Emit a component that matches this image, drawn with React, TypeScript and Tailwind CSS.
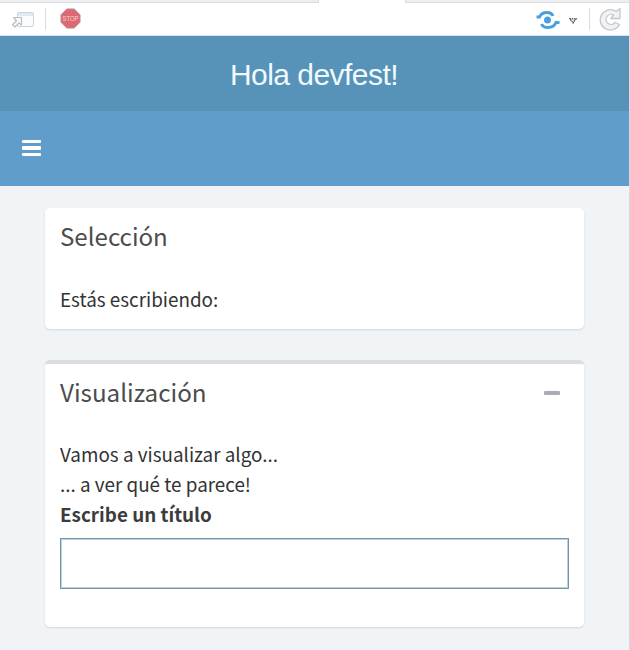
import React from "react";

function PopOutIcon() {
  return (
    <svg width="26" height="20" viewBox="0 0 26 20" fill="none" className="shrink-0">
      <rect x="6.5" y="3.5" width="16" height="14" rx="1.5" fill="#fbfcfd" stroke="#cbd2d9" />
      <rect x="7" y="4" width="15" height="3" fill="#dcecf7" />
      <path d="M2.500 8.500h8v7.500l-2.500-2-4 4-2.500-2.300 4-3.700z" fill="#fafafa" stroke="#b9bec4" strokeWidth="1.200" strokeLinejoin="round" />
    </svg>
  );
}

function StopIcon() {
  return (
    <svg width="22" height="22" viewBox="0 0 22 22" className="shrink-0">
      <path d="M6.800 1h7.400L20 6.800v7.400L14.200 20H6.800L1 14.200V6.800z" fill="#da6a73" stroke="#c58189" />
      <text x="10.500" y="13.200" textAnchor="middle" fontSize="7.500" textLength="16" lengthAdjust="spacingAndGlyphs" fontFamily="Liberation Sans, sans-serif" fill="#ffcdd0">STOP</text>
    </svg>
  );
}

function PublishIcon() {
  return (
    <svg width="26" height="20" viewBox="0 0 26 20" fill="none" className="shrink-0">
      <circle cx="12.500" cy="11" r="3.500" fill="#4aa0dc" />
      <path d="M1.500 8h3C6 4.500 9 3.500 12 3.500c3 0 5 1 6 3.500" stroke="#4aa0dc" strokeWidth="3" />
      <path d="M24.500 13.500h-3.500C19.500 17 16.500 18.500 13 18.500c-3 0-5.500-1-6.500-3.500" stroke="#4aa0dc" strokeWidth="3" />
    </svg>
  );
}

function RefreshIcon() {
  return (
    <svg width="24" height="24" viewBox="0 0 24 24" fill="none" className="shrink-0">
      <path
        d="M17.300 4.500 21 1.500V11.500H12L14.500 8A5 5 0 1 0 16 15.500L20.500 17.500A10.200 10.200 0 1 1 17.300 4.500Z"
        fill="#f0f2f4"
        stroke="#c3c8ce"
        strokeWidth="1.300"
        strokeLinejoin="round"
      />
    </svg>
  );
}

function Toolbar() {
  return (
    <div className="flex h-9 flex-col border-b border-[#d3e8f2] bg-white">
      <div className="flex h-[3px] justify-between">
        <div className="w-[319px] border-r border-b border-[#d9dcde] bg-[#eeeff0]" />
        <div className="w-[225px] border-b border-l border-[#d9dcde] bg-[#eeeff0]" />
      </div>
      <div className="flex h-8 items-center pr-[7px] pl-[11px]">
        <PopOutIcon />
        <div className="ml-2 h-[22px] w-px bg-[#d5dde2]" />
        <div className="ml-[14px]"><StopIcon /></div>
        <div className="ml-auto"><PublishIcon /></div>
        <svg width="8" height="6" viewBox="0 0 8 6" className="mt-[3px] ml-2">
          <path d="M.8.800h6.400L4 5z" fill="#ddd" stroke="#333" strokeWidth="1.100" strokeDasharray="1.300 .8" />
        </svg>
        <div className="ml-3 h-[22px] w-px bg-[#d9dce0]" />
        <div className="ml-[9px]"><RefreshIcon /></div>
      </div>
    </div>
  );
}

export default function App() {
  return (
    <div className="relative h-[650px] w-[630px] overflow-hidden bg-[#f0f4f7] font-['Noto_Sans_CJK_SC','Noto_Sans',sans-serif] text-[#333]">
      <Toolbar />
      <header className="flex h-[75px] items-center justify-center bg-[#5792b9] pt-[2px] pr-[2px] font-['Liberation_Sans',sans-serif] text-[30px] tracking-[-0.530px] text-[#f0fafc]">
        <span>Hola devfest!</span>
      </header>
      <nav className="flex h-[75px] items-center bg-[#609dca] pb-px pl-[22px]">
        <button className="flex w-[19px] flex-col gap-[3px]" aria-label="Menú">
          <span className="h-[3.500px] w-full rounded-[1px] bg-white" />
          <span className="h-[3.500px] w-full rounded-[1px] bg-white" />
          <span className="h-[3.500px] w-full rounded-[1px] bg-white" />
        </button>
      </nav>
      <main className="flex flex-col gap-[31px] pt-[22px] pr-[46px] pl-[45px]">
        <section className="h-[121px] rounded-[5px] bg-white px-[15px] pt-[13px] shadow-[0_1px_2px_rgba(0,0,0,0.12)]">
          <h3 className="text-[24.100px] leading-[30px] text-[#4c4c4c]">Selección</h3>
          <p className="mt-[33px] text-[18.850px] leading-[30px]">Estás escribiendo:</p>
        </section>
        <section className="h-[267px] rounded-[5px] border-t-4 border-[#dcdde4] bg-white px-[15px] pt-[13px] shadow-[0_1px_2px_rgba(0,0,0,0.12)]">
          <div className="flex items-center justify-between pr-[9px]">
            <h3 className="text-[24.200px] leading-[30px] text-[#4c4c4c]">Visualización</h3>
            <span className="h-1 w-4 translate-y-px rounded-[1px] bg-[#a9adb3]" />
          </div>
          <p className="mt-[32px] text-[18.850px] leading-[30px]">Vamos a visualizar algo...<br />... a ver qué te parece!</p>
          <label htmlFor="titulo" className="block text-[18.850px] leading-[30px] font-bold text-[#3c3c3c]">Escribe un título</label>
          <input id="titulo" className="mt-[9px] block h-[51px] w-full border-[1.500px] border-[#7297ad] bg-white px-3 shadow-[inset_0_0_0_1px_#bdd1dc] outline-none" />
        </section>
      </main>
      <div className="absolute top-0 right-0 h-full w-px bg-[#d9dbe1]" />
    </div>
  );
}
